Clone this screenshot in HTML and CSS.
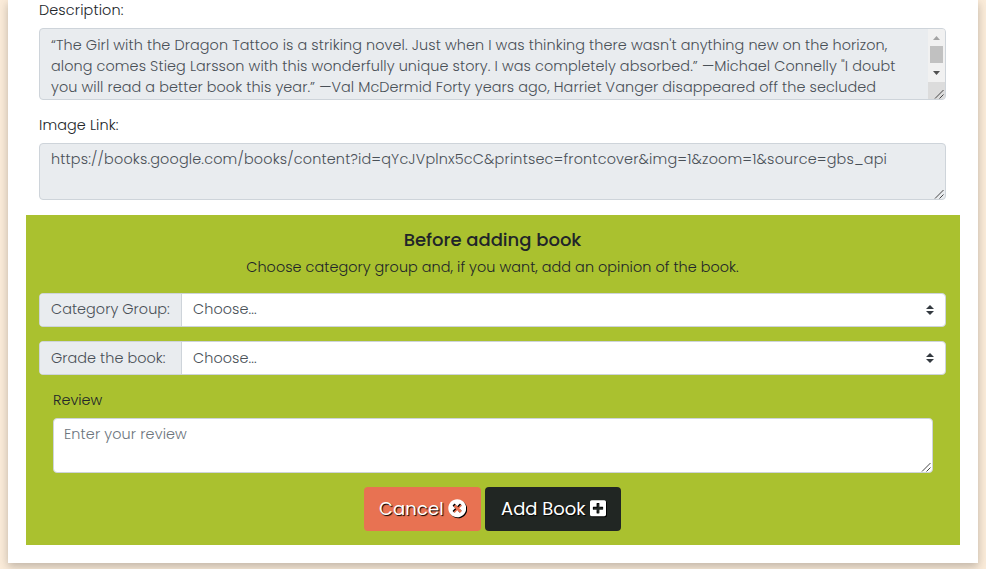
FILE: index.html
```
<!DOCTYPE html>
<html lang="en">
<head>
<meta charset="utf-8">
<title>Add book</title>
<link rel="stylesheet" href="styles.css">
</head>
<body>
<main class="card">
  <section class="details">
    <label class="label"><span class="t-desc">Description:</span></label>
    <div class="field description">
      <div class="lines">
        <span class="t-l1">“The Girl with the Dragon Tattoo is a striking novel. Just when I was thinking there wasn't anything new on the horizon,</span>
        <span class="t-l2">along comes Stieg Larsson with this wonderfully unique story. I was completely absorbed.” —Michael Connelly "I doubt</span>
        <span class="t-l3">you will read a better book this year.” —Val McDermid Forty years ago, Harriet Vanger disappeared off the secluded</span>
      </div>
      <div class="scrollbar">
        <svg class="bar" viewBox="0 0 17 53"><path fill="#a3a3a3" d="M5 11h7L8.500 7z"/><path fill="#c1c1c1" d="M2 17h13v17H2z"/><path fill="#505050" d="M5 42h7L8.500 46z"/></svg>
      </div>
      <svg class="grip" viewBox="0 0 10 10"><path d="M1 9.500 9.500 1M5.500 9.500l4-4"/></svg>
    </div>
    <label class="label"><span class="t-img">Image Link:</span></label>
    <div class="field link"><span class="t-url">https://books.google.com/books/content?id=qYcJVplnx5cC&amp;printsec=frontcover&amp;img=1&amp;zoom=1&amp;source=gbs_api</span>
      <svg class="grip" viewBox="0 0 10 10"><path d="M1 9.500 9.500 1M5.500 9.500l4-4"/></svg>
    </div>
  </section>
  <section class="panel">
    <h5 class="title"><span class="t-title">Before adding book</span></h5>
    <p class="hint"><span class="t-hint">Choose category group and, if you want, add an opinion of the book.</span></p>
    <div class="group">
      <div class="addon"><span class="t-cat">Category Group:</span></div>
      <div class="select"><span class="t-ch">Choose...</span><svg class="caret" viewBox="0 0 4 5"><path d="M2 0 0 2h4zm0 5L0 3h4z"/></svg></div>
    </div>
    <div class="group">
      <div class="addon"><span class="t-grade">Grade the book:</span></div>
      <div class="select"><span class="t-ch">Choose...</span><svg class="caret" viewBox="0 0 4 5"><path d="M2 0 0 2h4zm0 5L0 3h4z"/></svg></div>
    </div>
    <div class="review">
      <label class="label"><span class="t-rev">Review</span></label>
      <div class="field entry"><span class="t-enter">Enter your review</span>
        <svg class="grip" viewBox="0 0 10 10"><path d="M1 9.500 9.500 1M5.500 9.500l4-4"/></svg>
      </div>
    </div>
    <div class="actions">
      <button class="btn cancel"><span class="t-cancel">Cancel</span><svg class="icon" viewBox="0 0 512 512"><path d="M256 8C119 8 8 119 8 256s111 248 248 248 248-111 248-248S393 8 256 8zm121.600 313.100c4.700 4.700 4.700 12.300 0 17L338 377.600c-4.700 4.700-12.300 4.700-17 0L256 312l-65.100 65.600c-4.700 4.700-12.300 4.700-17 0L134.400 338c-4.700-4.700-4.700-12.300 0-17l65.600-65-65.600-65.100c-4.700-4.700-4.700-12.300 0-17l39.600-39.600c4.700-4.700 12.300-4.700 17 0l65 65.700 65.100-65.600c4.700-4.700 12.300-4.700 17 0l39.600 39.600c4.700 4.700 4.700 12.300 0 17L312 256z"/></svg></button>
      <button class="btn add"><span class="t-add">Add Book</span><svg class="icon plus" viewBox="0 0 448 512"><path d="M400 32H48C21.500 32 0 53.500 0 80v352c0 26.500 21.500 48 48 48h352c26.500 0 48-21.500 48-48V80c0-26.500-21.500-48-48-48zm-32 252c0 6.600-5.400 12-12 12h-92v92c0 6.600-5.400 12-12 12h-56c-6.600 0-12-5.400-12-12v-92H92c-6.600 0-12-5.400-12-12v-56c0-6.600 5.400-12 12-12h92v-92c0-6.600 5.400-12 12-12h56c6.600 0 12 5.400 12 12v92h92c6.600 0 12 5.400 12 12z"/></svg></button>
    </div>
  </section>
</main>
</body>
</html>
```
FILE: styles.css
```
* { box-sizing: border-box; }
body { margin: 0; height: 569px; overflow: hidden; background: #faebd9; color: #212529; font: 300 14.4px/21px Poppins, Inter, sans-serif; }
.card { width: 970px; height: 563px; margin: 0 8px; padding: 0 18px; background: #fff; box-shadow: 0 4px 8px rgba(0,0,0,.18), 0 2px 12px rgba(0,0,0,.06); }
.details { padding: 0 14px 0 13px; height: 215px; }
.label { display: block; height: 28px; line-height: 20px; }
span { white-space: nowrap; }
.field { position: relative; border: 1px solid #ced4da; border-radius: 4px; padding: 5px 11px; background: #e9ecef; color: #495057; }
.description { height: 72px; margin-bottom: 15px; display: flex; justify-content: space-between; padding: 0 0 0 11px; overflow: hidden; }
.lines { display: flex; flex-direction: column; padding-top: 6px; width: 860px; }
.lines span { align-self: flex-start; }
.scrollbar { width: 17px; background: #dcdcdc; }
.bar { display: block; width: 17px; height: 53px; background: #f1f1f1; }
.link { height: 57px; }
.grip { position: absolute; right: 1px; bottom: 0; width: 10px; height: 10px; fill: none; stroke: #333; stroke-width: .9; }
.panel { height: 330px; background: #aac12f; padding: 14px 14px 0 13px; }
.title { margin: 0; text-align: center; font-size: 18px; font-weight: 500; line-height: 21px; }
.hint { margin: 7px 0 15px; text-align: center; }
.group { display: flex; height: 34px; margin-bottom: 14px; border: 1px solid #ced4da; border-radius: 4px; background: #fff; color: #495057; overflow: hidden; }
.group + .group { margin-bottom: 15px; }
.addon { width: 142px; padding: 5px 11px; background: #e9ecef; border-right: 1px solid #ced4da; }
.group + .group .addon { padding-top: 6px; }
.select { flex: 1; display: flex; justify-content: space-between; align-items: center; padding: 0 11px; }
.select span { margin-top: -1px; }
.group + .group .select span { margin-top: 1px; }
.caret { width: 8px; height: 10px; fill: #343a40; }
.review { padding: 0 13px 0 14px; }
.entry { height: 55px; background: #fff; color: #6c757d; padding: 5px 10px; }
.actions { display: flex; justify-content: center; gap: 4px; margin-top: 14px; }
.btn { display: flex; align-items: center; gap: 4px; height: 44px; padding: 0 0 1px 15px; border: 0; border-radius: 4px; color: #fff; font: inherit; font-size: 18px; font-weight: 400; text-shadow: 1px 1px 1px #000; }
.cancel { background: #e87252; width: 117px; }
.add { background: #212623; width: 136px; padding-left: 16px; }
.icon { width: 18.500px; height: 18.500px; flex: none; fill: #fff; filter: drop-shadow(1px 1px .5px #000); }
.plus { width: 16px; }

/* Tracking per text run */
.t-desc { letter-spacing: .13px; }
.t-l1 { letter-spacing: .09px; }
.t-l2 { letter-spacing: .09px; }
.t-l3 { letter-spacing: .08px; }
.t-img { letter-spacing: .1px; }
.t-url { letter-spacing: .17px; }
.t-hint { letter-spacing: .05px; }
.t-cat { letter-spacing: .05px; }
.t-grade { letter-spacing: .05px; }
.t-ch { letter-spacing: .1px; }
.t-enter { letter-spacing: .12px; }
.t-cancel { letter-spacing: .12px; }
```
